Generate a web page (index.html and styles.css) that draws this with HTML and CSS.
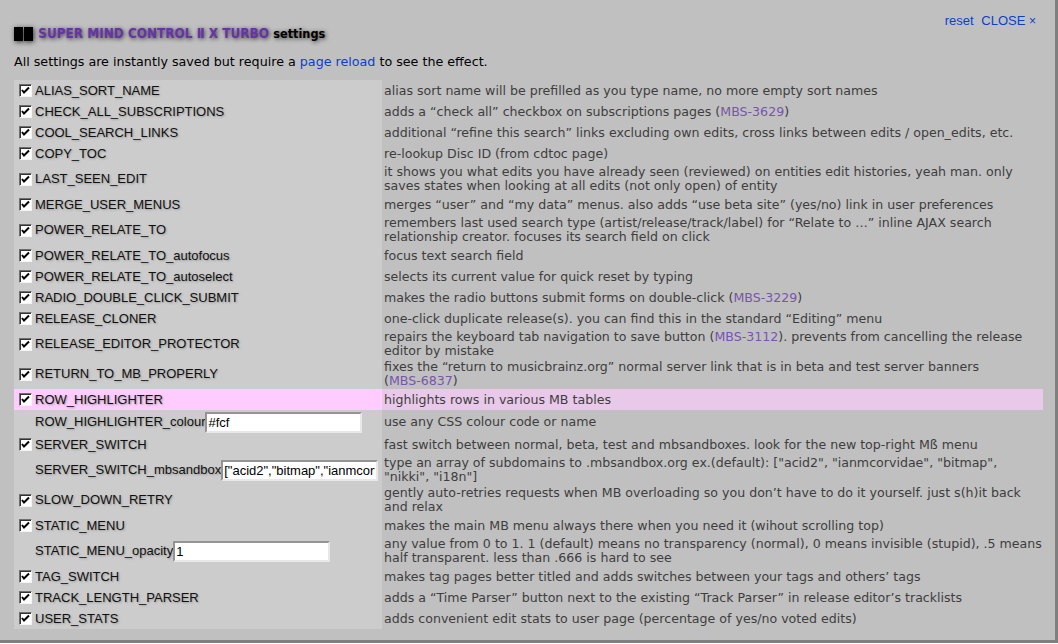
FILE: index.html
```html
<!DOCTYPE html>
<html lang="en">
<head>
  <meta charset="UTF-8">
  <title>SUPER MIND CONTROL Ⅱ X TURBO settings</title>
  <link rel="stylesheet" href="styles.css">
</head>
<body>
  <div id="smc-settings">
    <div class="toplinks"><a href="#">reset</a> <a href="#">CLOSE <span class="x">×</span></a></div>
    <h4 class="title"><span class="blk"></span><span class="blk"></span> <span class="name">SUPER MIND CONTROL Ⅱ X TURBO</span> <span class="word">settings</span></h4>
    <p class="intro">All settings are instantly saved but require a <a href="#">page reload</a> to see the effect.</p>

    <table class="opts">
      <colgroup><col class="c1"><col></colgroup>
      <tr><td><label class="o"><span class="cb"><svg viewBox="0 0 11 11"><path d="M2 5l2 2.5 5-5"/></svg></span>ALIAS_SORT_NAME</label></td><td class="desc">alias sort name will be prefilled as you type name, no more empty sort names</td></tr>
      <tr><td><label class="o"><span class="cb"><svg viewBox="0 0 11 11"><path d="M2 5l2 2.5 5-5"/></svg></span>CHECK_ALL_SUBSCRIPTIONS</label></td><td class="desc">adds a “check all” checkbox on subscriptions pages (<a href="#">MBS-3629</a>)</td></tr>
      <tr><td><label class="o"><span class="cb"><svg viewBox="0 0 11 11"><path d="M2 5l2 2.5 5-5"/></svg></span>COOL_SEARCH_LINKS</label></td><td class="desc">additional “refine this search” links excluding own edits, cross links between edits / open_edits, etc.</td></tr>
      <tr><td><label class="o"><span class="cb"><svg viewBox="0 0 11 11"><path d="M2 5l2 2.5 5-5"/></svg></span>COPY_TOC</label></td><td class="desc">re-lookup Disc ID (from cdtoc page)</td></tr>
      <tr><td><label class="o"><span class="cb"><svg viewBox="0 0 11 11"><path d="M2 5l2 2.5 5-5"/></svg></span>LAST_SEEN_EDIT</label></td><td class="desc">it shows you what edits you have already seen (reviewed) on entities edit histories, yeah man. only saves states when looking at all edits (not only open) of entity</td></tr>
      <tr><td><label class="o"><span class="cb"><svg viewBox="0 0 11 11"><path d="M2 5l2 2.5 5-5"/></svg></span>MERGE_USER_MENUS</label></td><td class="desc">merges “user” and “my data” menus. also adds “use beta site” (yes/no) link in user preferences</td></tr>
      <tr><td><label class="o"><span class="cb"><svg viewBox="0 0 11 11"><path d="M2 5l2 2.5 5-5"/></svg></span>POWER_RELATE_TO</label></td><td class="desc">remembers last used search type (artist/release/track/label) for “Relate to …” inline AJAX search relationship creator. focuses its search field on click</td></tr>
      <tr><td><label class="o"><span class="cb"><svg viewBox="0 0 11 11"><path d="M2 5l2 2.5 5-5"/></svg></span>POWER_RELATE_TO_autofocus</label></td><td class="desc">focus text search field</td></tr>
      <tr><td><label class="o"><span class="cb"><svg viewBox="0 0 11 11"><path d="M2 5l2 2.5 5-5"/></svg></span>POWER_RELATE_TO_autoselect</label></td><td class="desc">selects its current value for quick reset by typing</td></tr>
      <tr><td><label class="o"><span class="cb"><svg viewBox="0 0 11 11"><path d="M2 5l2 2.5 5-5"/></svg></span>RADIO_DOUBLE_CLICK_SUBMIT</label></td><td class="desc">makes the radio buttons submit forms on double-click (<a href="#">MBS-3229</a>)</td></tr>
      <tr><td><label class="o"><span class="cb"><svg viewBox="0 0 11 11"><path d="M2 5l2 2.5 5-5"/></svg></span>RELEASE_CLONER</label></td><td class="desc">one-click duplicate release(s). you can find this in the standard “Editing” menu</td></tr>
      <tr><td><label class="o"><span class="cb"><svg viewBox="0 0 11 11"><path d="M2 5l2 2.5 5-5"/></svg></span>RELEASE_EDITOR_PROTECTOR</label></td><td class="desc">repairs the keyboard tab navigation to save button (<a href="#">MBS-3112</a>). prevents from cancelling the release editor by mistake</td></tr>
      <tr><td><label class="o"><span class="cb"><svg viewBox="0 0 11 11"><path d="M2 5l2 2.5 5-5"/></svg></span>RETURN_TO_MB_PROPERLY</label></td><td class="desc">fixes the “return to musicbrainz.org” normal server link that is in beta and test server banners (<a href="#" class="nb">MBS-6837</a>)</td></tr>
      <tr class="hl"><td><label class="o"><span class="cb"><svg viewBox="0 0 11 11"><path d="M2 5l2 2.5 5-5"/></svg></span>ROW_HIGHLIGHTER</label></td><td class="desc">highlights rows in various MB tables</td></tr>
      <tr><td><label class="o sub">ROW_HIGHLIGHTER_colour<input type="text" value="#fcf"></label></td><td class="desc">use any CSS colour code or name</td></tr>
      <tr><td><label class="o"><span class="cb"><svg viewBox="0 0 11 11"><path d="M2 5l2 2.5 5-5"/></svg></span>SERVER_SWITCH</label></td><td class="desc">fast switch between normal, beta, test and mbsandboxes. look for the new top-right Mß menu</td></tr>
      <tr><td><label class="o sub">SERVER_SWITCH_mbsandbox<input type="text" value='["acid2","bitmap","ianmcorvidae","nikki","i18n"]'></label></td><td class="desc">type an array of subdomains to .mbsandbox.org ex.(default): ["acid2", "ianmcorvidae", "bitmap", "nikki", "i18n"]</td></tr>
      <tr><td><label class="o"><span class="cb"><svg viewBox="0 0 11 11"><path d="M2 5l2 2.5 5-5"/></svg></span>SLOW_DOWN_RETRY</label></td><td class="desc">gently auto-retries requests when MB overloading so you don’t have to do it yourself. just s(h)it back and relax</td></tr>
      <tr><td><label class="o"><span class="cb"><svg viewBox="0 0 11 11"><path d="M2 5l2 2.5 5-5"/></svg></span>STATIC_MENU</label></td><td class="desc">makes the main MB menu always there when you need it (wihout scrolling top)</td></tr>
      <tr><td><label class="o sub">STATIC_MENU_opacity<input type="text" value="1"></label></td><td class="desc">any value from 0 to 1. 1 (default) means no transparency (normal), 0 means invisible (stupid), .5 means half transparent. less than .666 is hard to see</td></tr>
      <tr><td><label class="o"><span class="cb"><svg viewBox="0 0 11 11"><path d="M2 5l2 2.5 5-5"/></svg></span>TAG_SWITCH</label></td><td class="desc">makes tag pages better titled and adds switches between your tags and others’ tags</td></tr>
      <tr><td><label class="o"><span class="cb"><svg viewBox="0 0 11 11"><path d="M2 5l2 2.5 5-5"/></svg></span>TRACK_LENGTH_PARSER</label></td><td class="desc">adds a “Time Parser” button next to the existing “Track Parser” in release editor’s tracklists</td></tr>
      <tr><td><label class="o"><span class="cb"><svg viewBox="0 0 11 11"><path d="M2 5l2 2.5 5-5"/></svg></span>USER_STATS</label></td><td class="desc">adds convenient edit stats to user page (percentage of yes/no voted edits)</td></tr>
    </table>
  </div>
</body>
</html>
```

FILE: styles.css
```css
/* Page */
body {
  margin: 0;
  background: #fff;
  font-family: "DejaVu Sans", Verdana, sans-serif;
  font-size: 13px;
}
a { color: #0a3fcc; text-decoration: none; }

/* Settings panel */
#smc-settings {
  width: 1029px;
  height: 626px;
  padding: 14px 12px 0 14px;
  background: #c0c0c0;
  border-right: 3px solid #7f7f7f;
  border-bottom: 3px solid #7f7f7f;
  line-height: 14px;
}

.toplinks {
  height: 13px;
  text-align: right;
  padding-right: 7px;
  font-family: "Liberation Sans", Arial, sans-serif;
}
.toplinks a { margin-left: 4px; }
.toplinks .x { font-size: 12px; }

.title {
  margin: 0;
  font-family: "DejaVu Sans Condensed", "DejaVu Sans", sans-serif;
  font-size: 13.4px;
  font-weight: bold;
  color: #000;
  text-shadow: 1px 1px 4px #333;
}
.title .blk {
  display: inline-block;
  width: 9px;
  height: 14px;
  margin-right: 1px;
  vertical-align: -3px;
  background: #000;
  box-shadow: 1px 1px 5px #333;
}
.title .name { color: #6633aa; }
.title .word { font-size: 12.6px; }

.intro {
  margin: 14px 0 11px;
  font-size: 12.7px;
  color: #000;
}

/* Options table */
.opts {
  width: 1029px;
  table-layout: fixed;
  border-collapse: collapse;
}
.opts .c1 { width: 368px; }
.opts td {
  padding: 1px;
  vertical-align: middle;
  background: #cccccc;
  overflow: hidden;
}
.opts td.desc {
  padding-left: 2px;
  background: transparent;
  color: #3e3e3e;
  font-size: 12.6px;
}
.desc a { color: #7755b0; }
.desc .nb { white-space: nowrap; }

.o {
  display: flex;
  align-items: center;
  min-height: 19px;
  white-space: nowrap;
  font-family: "Liberation Sans", Arial, sans-serif;
  color: #111;
  text-shadow: 1px 1px 2px #999;
}
.o.sub {
  min-height: 22px;
  padding-left: 20px;
}

.hl td { background: #ffccff; }
.hl td.desc { background: #e9c9e9; }

/* Classic checkbox */
.cb {
  flex: none;
  width: 11px;
  height: 11px;
  margin: 0 3px 0 4px;
  background: #fff;
  border: 1px solid;
  border-color: #6e6e6e #f4f4f4 #f4f4f4 #6e6e6e;
  box-shadow: inset 1px 1px 0 #333;
}
.cb svg { display: block; width: 11px; height: 11px; }
.cb path {
  fill: none;
  stroke: #000;
  stroke-width: 2;
}

.o input {
  flex: none;
  width: 157px;
  height: 21px;
  margin: 0;
  padding: 0 1px;
  box-sizing: border-box;
  border: 2px inset #e8e8e8;
  font-family: "Liberation Sans", Arial, sans-serif;
  font-size: 13px;
  color: #000;
  text-shadow: none;
}
```
